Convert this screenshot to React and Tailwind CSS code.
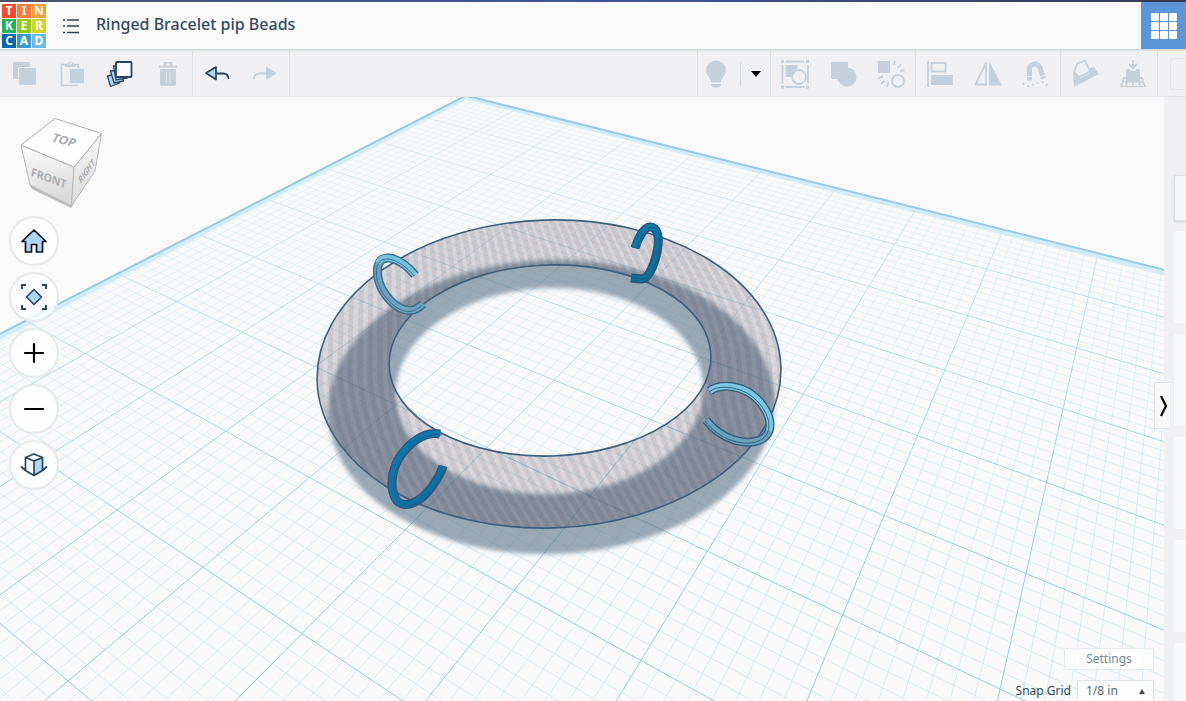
import React, { useState } from 'react';

const logoTiles = [
  { letter: 'T', color: 'bg-[#f8492c]' },
  { letter: 'I', color: 'bg-[#fb7a3a]' },
  { letter: 'N', color: 'bg-[#fb9a3a]' },
  { letter: 'K', color: 'bg-[#1fb45a]' },
  { letter: 'E', color: 'bg-[#8fcb17]' },
  { letter: 'R', color: 'bg-[#d2d42c]' },
  { letter: 'C', color: 'bg-[#0067b3]' },
  { letter: 'A', color: 'bg-[#3d98d0]' },
  { letter: 'D', color: 'bg-[#6cbbe2]' },
];

// Workplane projection. One unit is one inch, the plane starts at -5 / -5.
const project = (a, b) => {
  const s = -0.05603 * a;
  const t = -0.0915 * b;
  const w = 1 + s + t;
  return [(554 - 1080 * s + 1220 * t) / w, (380 - 290 * s - 290 * t) / w];
};

const limit = (n, own, other) => Math.min(14, (0.88 + own * n) / -other);

const lineA = (a) => {
  const [x1, y1] = project(a, -5);
  const [x2, y2] = project(a, limit(a, -0.05603, -0.0915));
  return `M${x1.toFixed(1)} ${y1.toFixed(1)}L${x2.toFixed(1)} ${y2.toFixed(1)}`;
};

const lineB = (b) => {
  const [x1, y1] = project(-5, b);
  const [x2, y2] = project(limit(b, -0.0915, -0.05603), b);
  return `M${x1.toFixed(1)} ${y1.toFixed(1)}L${x2.toFixed(1)} ${y2.toFixed(1)}`;
};

const steps = Array.from({ length: 121 }, (_, i) => -5 + i / 8);
const isInch = (n) => Number.isInteger(n);
const minorLines = steps.filter(n => !isInch(n)).map(n => lineA(n) + (n < 9 ? lineB(n) : '')).join('');
const majorLines = steps.filter(isInch).map(n => lineA(n) + (n < 9 ? lineB(n) : '')).join('');

const quad = (pts) => pts.map(([a, b]) => project(a, b).map(v => v.toFixed(1)).join(',')).join(' ');
const leftBand = quad([[-5, -5], [-5, 7], [-4.9, 7], [-4.9, -4.9]]);
const rightBand = quad([[-5, -5], [9, -5], [9, -4.88], [-4.88, -4.88]]);
const plane = quad([[-5, -5], [9, -5], [9, 3.5], [-5, 10]]);

const stripes = Array.from({ length: 60 }, (_, i) => {
  const x = 280 + i * 10;
  const top = 20 - i * 2;
  return `M${x + top} 212Q${x} 310 ${x} 378Q${x + 6} 450 ${x + 62} 532`;
}).join('');

const beads = [
  {
    path: 'M415 275C408 266 398 259 389 258C379 257 376 266 378 278C381 292 391 303 400 308C410 313 417 310 423 304',
    color: '#74c3de', shade: '#6ba5bd', edge: '#3d6e8e', shift: 'translate(-1 1)',
    over: 'M415 275C408 266 398 259 389 258C384 257 380 259 378 263',
  },
  {
    path: 'M635 248C638 238 644 227 650 227C658 227 660 238 657 252C654 266 648 280 641 279L631 278',
    color: '#0678ae', shade: '#0b6f9f', edge: '#2c5474', shift: 'translate(2 0)',
    over: 'M635 248C638 238 644 227 650 227C655 227 658 232 658 239',
  },
  {
    path: 'M440 434C424 431 409 443 399 458C391 472 389 490 397 501C407 510 422 500 431 488C437 480 441 473 443 466',
    color: '#0779ae', shade: '#0674a6', edge: '#35567a', shift: 'translate(2 1)',
    over: 'M440 434C424 431 409 443 399 458C391 472 389 490 397 501',
  },
  {
    path: 'M710 391C718 384 735 385 748 392C763 401 773 418 769 431C764 443 748 444 734 440C722 436 713 429 706 420',
    color: '#7cc8e2', shade: '#6ba3ba', edge: '#335f80', shift: 'translate(-1 1)',
    over: 'M710 391C718 384 735 385 748 392C763 401 773 418 769 431',
  },
];

function Scene() {
  return (
    <svg className="absolute inset-0 h-full w-full" viewBox="0 97 1164 604" preserveAspectRatio="xMidYMin slice" aria-hidden="true">
      <defs>
        <filter id="soft" x="-10%" y="-10%" width="120%" height="120%">
          <feGaussianBlur stdDeviation="2.2" />
        </filter>
        <linearGradient id="minor" gradientUnits="userSpaceOnUse" x1="0" y1="97" x2="0" y2="600">
          <stop offset="0" stopColor="#b4dfea" stopOpacity="0.18" />
          <stop offset="1" stopColor="#b0deec" stopOpacity="0.48" />
        </linearGradient>
        <linearGradient id="major" gradientUnits="userSpaceOnUse" x1="0" y1="97" x2="0" y2="600">
          <stop offset="0" stopColor="#9fd3e2" stopOpacity="0.25" />
          <stop offset="0.5" stopColor="#8ccbe0" stopOpacity="0.6" />
          <stop offset="1" stopColor="#82c5dc" stopOpacity="0.85" />
        </linearGradient>
        <clipPath id="ringClip">
          <path clipRule="evenodd" transform="rotate(-1.8 549 374)" d="M317 374a232 154 0 1 0 464 0a232 154 0 1 0 -464 0zM389 360a161 95 0 1 0 322 0a161 95 0 1 0 -322 0z" />
        </clipPath>
      </defs>
      <polygon points={plane} fill="#f9f9f9" />
      <path d={minorLines} stroke="url(#minor)" fill="none" />
      <path d={majorLines} stroke="url(#major)" fill="none" />
      <polygon points={leftBand} fill="#c3e8f3" fillOpacity="0.7" />
      <polygon points={rightBand} fill="#c3e8f3" fillOpacity="0.7" />
      <path d={lineA(-5) + lineB(-5)} stroke="#94cde2" strokeWidth="2" fill="none" />

      <g filter="url(#soft)">
        <path fillRule="evenodd" fill="#4d657e" fillOpacity="0.55" transform="rotate(-1.8 551 407)" d="M328 407a223 147 0 1 0 446 0a223 147 0 1 0 -446 0zM396 391a154 103 0 1 0 308 0a154 103 0 1 0 -308 0z" />
      </g>
      <g clipPath="url(#ringClip)">
        <rect x="310" y="210" width="480" height="330" fill="#35253c" fillOpacity="0.16" />
        <path d={stripes} stroke="#1b1218" strokeOpacity="0.07" strokeWidth="5" fill="none" />
      </g>
      <g fill="none" stroke="#3f5d7e" strokeWidth="1.6">
        <ellipse cx="549" cy="374" rx="232" ry="154" transform="rotate(-1.8 549 374)" />
        <ellipse cx="550" cy="360.5" rx="161" ry="95.5" transform="rotate(-1.8 550 360.5)" />
      </g>
      {beads.map((bead, i) => (
        <g key={i} fill="none">
          <path d={bead.path} stroke={bead.edge} strokeWidth="9" />
          <path d={bead.path} stroke={bead.shade} strokeWidth="6" />
          <path d={bead.over} stroke={bead.color} strokeWidth="6" />
          <path d={bead.path} stroke={bead.edge} strokeWidth="1" transform={bead.shift} />
        </g>
      ))}
    </svg>
  );
}

function ViewCube() {
  return (
    <svg width="84" height="94" viewBox="20 117 84 94" role="img" aria-label="View cube">
      <defs>
        <linearGradient id="front" x1="0" y1="0" x2="0.2" y2="1">
          <stop offset="0" stopColor="#fdfdfd" />
          <stop offset="1" stopColor="#d9d9da" />
        </linearGradient>
      </defs>
      <polygon points="29,184 32,189 71,208 74,203 72,196" fill="#bcbcbf" />
      <polygon points="21,145 74,167 71.500,206 30,185" fill="url(#front)" stroke="#b9b9bc" />
      <polygon points="74,167 101.500,133.500 95,171 71.500,206" fill="url(#front)" stroke="#b9b9bc" />
      <polygon points="55,118.500 101.500,133.500 74,167 21,145" fill="#fefefe" stroke="#aeaeb2" />
      <g fill="#acaeb3" fontFamily="'Open Sans', 'Noto Sans', sans-serif" fontWeight="700" textAnchor="middle">
        <text fontSize="12" transform="translate(62 144) rotate(15) skewX(-14)">TOP</text>
        <text fontSize="11" transform="translate(48 182) rotate(20) skewX(10)">FRONT</text>
        <text fontSize="8" transform="translate(88 174) rotate(-54) skewX(-28)">RIGHT</text>
      </g>
    </svg>
  );
}

function Icon({ children }) {
  return <svg width="32" height="32" viewBox="0 0 32 32" fill="none" aria-hidden="true">{children}</svg>;
}

const gray = '#c5d0da';
const navy = '#2b445c';

const icons = {
  copy: <><rect x="5" y="4" width="17" height="17" rx="1.500" fill={gray} /><rect x="10.500" y="9.500" width="18" height="18" rx="2" fill={gray} stroke="#f0f0f2" /></>,
  paste: <>
    <path d="M22 12V6.500H5.500V27.500H22" stroke={gray} strokeWidth="1.700" />
    <path d="M9 9V6h3a2.500 2.500 0 0 1 5 0h3v3z" fill={gray} /><circle cx="14.500" cy="5.500" r="1.200" fill="#f0f0f2" />
    <rect x="13.500" y="10.500" width="15" height="15" rx="1" fill={gray} stroke="#f0f0f2" />
  </>,
  duplicate: <>
    <path d="M3.500 18l8-2 4 9-9 3.500z" fill="#a9d8fb" stroke={navy} strokeWidth="1.300" strokeLinejoin="round" />
    <path d="M6.500 13l10-1 3 11-9.500 2z" fill="#a9d8fb" stroke={navy} strokeWidth="1.300" strokeLinejoin="round" />
    <path d="M9.500 8l12 0 2 12-11.500 2z" fill="#a9d8fb" stroke={navy} strokeWidth="1.300" />
    <rect x="12" y="4" width="15.500" height="15" rx="1" fill="#fafafa" stroke={navy} strokeWidth="1.800" />
  </>,
  trash: <>
    <path d="M7 8.500h18M12.500 8V4.800h7V8" stroke={gray} strokeWidth="1.800" />
    <path d="M8 11h16v15q0 2-2 2H10q-2 0-2-2z" fill={gray} /><path d="M14.500 14v11M18 14v11" stroke="#dfe5ea" />
  </>,
  undo: <><path d="M16 15.500h6q5.500 0 5.500 5.500" stroke={navy} strokeWidth="1.800" /><path d="M15 9L5 15 15 21.500z" fill="#a9d8fb" stroke={navy} strokeWidth="1.700" strokeLinejoin="round" /></>,
  redo: <><path d="M17 15.500h-6q-6 0-6 5.500" stroke={gray} strokeWidth="1.800" /><path d="M17 8.500l11 6.500-11 7z" fill={gray} /></>,
  bulb: <path d="M16 2.500a10 10 0 0 0-10 10c0 5 5 7 5 12h10c0-5 5-7 5-12a10 10 0 0 0-10-10zM11 26h10v1.500l-2 2h-6l-2-2z" fill={gray} />,
  group: <>
    <path d="M6.500 3.500h19M6.500 29h19M3.500 7v18.500M29 7v18.500" stroke={gray} strokeWidth="1.800" />
    <path d="M2 2h3v3H2zM27 2h3v3h-3zM2 27.500h3v3H2zM27 27.500h3v3h-3z" fill={gray} />
    <rect x="6.500" y="7" width="12" height="12" fill={gray} /><circle cx="20" cy="19" r="7" fill="#f0f0f2" stroke={gray} strokeWidth="1.800" />
  </>,
  union: <><rect x="4" y="4" width="17" height="17" rx="1" fill={gray} /><circle cx="20" cy="19" r="9.500" fill={gray} /></>,
  ungroup: <>
    <rect x="3" y="3" width="12" height="12" fill={gray} /><circle cx="23" cy="23" r="6" stroke={gray} strokeWidth="1.800" />
    <path d="M19 7l1-4M22.500 9.500l4-3M25 13.500l4.500-1M3 20l5-1.500M6 26l3.500-3.500M12 28.500l1.500-4" stroke={gray} strokeWidth="2" />
  </>,
  align: <><path d="M4 3v26" stroke={gray} strokeWidth="1.800" /><rect x="7.500" y="5" width="14" height="8.500" stroke={gray} strokeWidth="1.800" /><rect x="7" y="17" width="22" height="10" fill={gray} /></>,
  mirror: <><path d="M14 5v21.500H3.500z" stroke={gray} strokeWidth="1.800" strokeLinejoin="round" /><path d="M17 3l13 24.500H17z" fill={gray} /></>,
  magnet: <>
    <path d="M9.500 22.500v-10a5.500 5.500 0 0 1 10.500-3l3.500 11" stroke={gray} strokeWidth="5" /><path d="M6.500 18.500h6M20 18.500l5.500-1.500" stroke="#f0f0f2" />
    <path d="M3 25q3 4 7 2.500t9-3 9 3.500" stroke={gray} strokeWidth="2" strokeDasharray="2 3" />
  </>,
  workplane: <>
    <path d="M4 16l1 13L30 16l-5-7-4 1v5l-10 5-5-6z" fill={gray} />
    <path d="M5 14.500L8.500 5.500 16 2.500l5 11-11 5.500z" fill="#f0f0f2" stroke={gray} strokeWidth="1.800" strokeLinejoin="round" />
  </>,
  drop: <>
    <path d="M7 20h18l3 8.500H4z" stroke={gray} strokeWidth="1.700" /><path d="M5 24h22M11 20l-2 8M21 20l2 8M16 20v8" stroke={gray} strokeWidth="1.500" />
    <path d="M9 12q3-2 4 0 3 2 6 0 1-2 4 0v12H9z" fill={gray} /><path d="M16 2v7M12 6l4 4 4-4" stroke={gray} strokeWidth="1.800" />
  </>,
  home: <path d="M4 16.500L16 5l12 11.500h-3.500V27h-6v-7.500h-5V27h-6V16.500z" fill="#a9d8fb" stroke="#111" strokeWidth="1.700" strokeLinejoin="round" />,
  fit: <>
    <path d="M4 8V4h4M24 4h4v4M28 24v4h-4M8 28H4v-4" stroke={navy} strokeWidth="1.900" />
    <path d="M16 8.500l7.500 7.500-7.500 7.500L8.500 16z" fill="#a9d8fb" stroke={navy} strokeWidth="1.600" strokeLinejoin="round" />
  </>,
  zoomIn: <path d="M7 16h18M16 7v18" stroke="#000" strokeWidth="2.200" strokeLinecap="round" />,
  zoomOut: <path d="M7 16h18" stroke="#000" strokeWidth="2.200" strokeLinecap="round" />,
  ortho: <>
    <path d="M7.500 8.500L16 5l8.500 3.500v13L16 26.500l-8.500-5z" fill="#fff" /><path d="M16 12l8.500-3.500v13L16 26.500z" fill="#a9d8fb" />
    <path d="M7.500 8.500L16 5l8.500 3.500v13L16 26.500l-8.500-5zM7.500 8.500L16 12l8.500-3.500M16 12v14M7.500 21.500L3 17.500M24.500 21.500L29 17.500" stroke={navy} strokeWidth="1.700" strokeLinejoin="round" />
  </>,
};

function ToolButton({ icon, label, disabled }) {
  return (
    <button aria-label={label} disabled={disabled} className="flex w-12 shrink-0 items-center justify-center">
      <Icon>{icons[icon]}</Icon>
    </button>
  );
}

const viewButtons = [
  ['home', 'Home view'],
  ['fit', 'Fit all in view'],
  ['zoomIn', 'Zoom in'],
  ['zoomOut', 'Zoom out'],
  ['ortho', 'Switch to flat view'],
];

export default function App() {
  const [snap, setSnap] = useState('1/8 in');

  return (
    <div className="flex h-screen flex-col overflow-hidden bg-[#fafafa] font-['Noto_Sans',sans-serif] text-[#33495f]">
      <div className="h-0.5 shrink-0 bg-linear-to-r from-[#4a5068] via-[#41529a] to-[#363a52]" />
      <header className="flex h-12 shrink-0 items-center border-b border-[#cdd6df]">
        <a href="#home" aria-label="Tinkercad" className="ml-0.5 grid grid-cols-3 gap-px">
          {logoTiles.map(t => (
            <span key={t.letter} className={`flex h-3.5 w-3.5 items-center justify-center text-xs leading-none font-bold text-white ${t.color}`}>{t.letter}</span>
          ))}
        </a>
        <button aria-label="Designs" className="ml-4">
          <svg width="18" height="18" viewBox="0 0 18 18" aria-hidden="true">
            <path d="M5 3h12M5 9h12M5 15.500h12M1 3h2M1 9h2M1 15.500h2" stroke={navy} strokeWidth="1.600" />
          </svg>
        </button>
        <h1 className="ml-4 pb-1 text-base font-medium">Ringed Bracelet pip Beads</h1>
        <button aria-label="Dashboard" className="ml-auto flex h-full w-[45px] items-center justify-center bg-[#5b95da]">
          <span className="grid grid-cols-3 gap-px">
            {logoTiles.map(t => <span key={t.letter} className="h-2 w-2 rounded-[1px] bg-white" />)}
          </span>
        </button>
      </header>

      <div className="flex h-[47px] shrink-0 overflow-hidden border-t border-b border-[#e1e5ea] bg-[#f0f0f2]">
        <div className="flex border-r border-[#dde1e7]">
          <ToolButton icon="copy" label="Copy" disabled />
          <ToolButton icon="paste" label="Paste" disabled />
          <ToolButton icon="duplicate" label="Duplicate and repeat" />
          <ToolButton icon="trash" label="Delete" disabled />
        </div>
        <div className="flex border-r border-[#dde1e7]">
          <ToolButton icon="undo" label="Undo" />
          <ToolButton icon="redo" label="Redo" disabled />
        </div>
        <div className="ml-auto flex items-center border-r border-l border-[#dde1e7]">
          <button aria-label="Show all" className="flex w-9 justify-center"><Icon>{icons.bulb}</Icon></button>
          <span className="ml-1.5 h-6 w-px bg-[#d3dae1]" />
          <button aria-label="Visibility options" className="flex w-[29px] justify-center">
            <svg width="10" height="6" viewBox="0 0 10 6" aria-hidden="true"><path d="M0 0h10L5 6z" fill="#000" /></svg>
          </button>
        </div>
        <div className="flex border-r border-[#dde1e7]">
          <ToolButton icon="group" label="Group" disabled />
          <ToolButton icon="union" label="Union group" disabled />
          <ToolButton icon="ungroup" label="Ungroup" disabled />
        </div>
        <div className="flex border-r border-[#dde1e7]">
          <ToolButton icon="align" label="Align" disabled />
          <ToolButton icon="mirror" label="Mirror" disabled />
          <ToolButton icon="magnet" label="Cruise" disabled />
        </div>
        <div className="flex border-r border-[#dde1e7]">
          <ToolButton icon="workplane" label="Workplane" disabled />
          <ToolButton icon="drop" label="Drop to workplane" disabled />
        </div>
        <div className="flex w-7 items-center justify-end">
          <button aria-label="Import" className="h-8 w-4 rounded-l border border-r-0 border-[#e2e5e9]" />
        </div>
      </div>

      <div className="flex min-h-0 flex-1">
        <main className="relative min-w-0 flex-1 overflow-hidden">
          <Scene />
          <div className="absolute top-5 left-2 flex flex-col">
            <div className="ml-3"><ViewCube /></div>
            <div className="mt-[5px] ml-px flex flex-col gap-1.5">
              {viewButtons.map(([icon, label]) => (
                <button key={icon} aria-label={label} className="flex h-[50px] w-[50px] items-center justify-center rounded-full border-2 border-[#e6e8ea] bg-white/80">
                  <Icon>{icons[icon]}</Icon>
                </button>
              ))}
            </div>
          </div>
          <div className="absolute right-2.5 -bottom-px flex flex-col items-end gap-2.5 text-xs">
            <button className="h-[22px] w-[90px] rounded-xs border border-[#e4e8ec] bg-white/80 text-[#77879a]">Settings</button>
            <div className="flex items-center gap-1.5">
              <label htmlFor="snap">Snap Grid</label>
              <div className="relative">
                <select id="snap" value={snap} onChange={e => setSnap(e.target.value)} className="h-[22px] w-[77px] appearance-none rounded-xs border border-[#dfe3e8] bg-white/80 pl-2 text-[#5b6876]">
                  <option>1/16 in</option>
                  <option>1/8 in</option>
                  <option>1/4 in</option>
                </select>
                <svg className="pointer-events-none absolute top-2 right-2" width="8" height="6" viewBox="0 0 8 6" aria-hidden="true"><path d="M4 1l3 5H1z" fill="#444" /></svg>
              </div>
            </div>
          </div>
        </main>

        <aside className="relative w-[22px] shrink-0 bg-[#f0f0f2] pt-[78px]">
          <button aria-label="Collapse panel" className="absolute top-[285px] -left-2.5 flex h-[47px] w-4 items-center justify-center border border-r-0 border-[#dfe2e6] bg-[#f8f8f9]">
            <svg width="10" height="24" viewBox="0 0 10 24" aria-hidden="true"><path d="M3 2l5 10-5 10" stroke="#000" strokeWidth="2.200" fill="none" /></svg>
          </button>
          <div className="ml-2.5 h-[46px] rounded-l-xs border border-r-0 border-[#dde2e8] bg-[#f5f6f8] shadow-sm" />
          <div className="mt-2.5 ml-2.5 flex flex-col gap-[11px]">
            {[1, 2, 3, 4, 5].map(n => <div key={n} className="h-[92px] shrink-0 rounded-l-xs bg-[#f6f8fa]" />)}
          </div>
        </aside>
      </div>
    </div>
  );
}
